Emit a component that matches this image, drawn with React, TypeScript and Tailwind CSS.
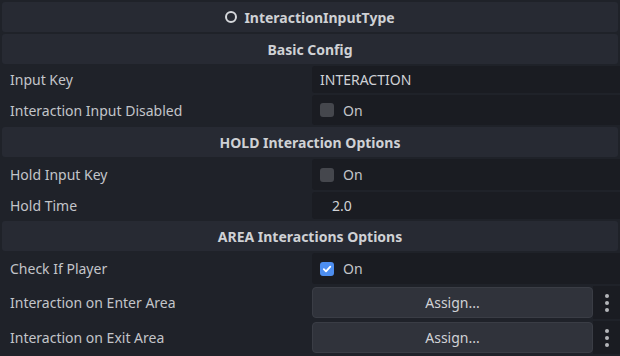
import React from "react";

function Header({ title, icon }: { title: string; icon?: boolean }) {
  return (
    <div className="mx-[2px] h-[30px] rounded-[3px] bg-[#272a33] flex items-center justify-center gap-[7px] text-[14px] font-bold text-[#cfd1d5]">
      {icon && (
        <span className="w-[12px] h-[12px] rounded-full border-2 border-[#d6d8dc]" />
      )}
      {title}
    </div>
  );
}

function Row({ label, children, h = "h-[28px]" }: { label: string; children: React.ReactNode; h?: string }) {
  return (
    <div className={`flex items-stretch ${h}`}>
      <div className="w-[312px] shrink-0 flex items-center pl-[10px] text-[#c3c5c9]">{label}</div>
      <div className="flex-1 flex">{children}</div>
    </div>
  );
}

function Field({ children, className = "" }: { children: React.ReactNode; className?: string }) {
  return (
    <div className={`flex-1 rounded-l-[3px] bg-[#1a1c22] flex items-center text-[#d0d2d6] ${className}`}>
      {children}
    </div>
  );
}

function Check({ checked }: { checked?: boolean }) {
  return (
    <Field className="pl-[8px] gap-[9px]">
      {checked ? (
        <span className="w-[14px] h-[14px] rounded-[3px] bg-[#4d8ef0] flex items-center justify-center">
          <svg width="10" height="10" viewBox="0 0 10 10">
            <path d="M1.8 5.2 L4 7.4 L8.3 2.6" fill="none" stroke="#fff" strokeWidth="1.8" strokeLinecap="round" strokeLinejoin="round" />
          </svg>
        </span>
      ) : (
        <span className="w-[14px] h-[14px] rounded-[3px] bg-[#45474d]" />
      )}
      <span className="text-[#c3c5c9]">On</span>
    </Field>
  );
}

function Assign() {
  return (
    <>
      <div className="w-[281px] my-[1px] rounded-[4px] bg-[#30333b] border border-[#3a3d45] flex items-center justify-center text-[#d0d2d6]">
        Assign...
      </div>
      <div className="flex-1 bg-[#1a1c22] flex flex-col items-center justify-center gap-[3px]">
        <span className="w-[4px] h-[4px] rounded-full bg-[#b4b6ba]" />
        <span className="w-[4px] h-[4px] rounded-full bg-[#b4b6ba]" />
        <span className="w-[4px] h-[4px] rounded-full bg-[#b4b6ba]" />
      </div>
    </>
  );
}

export default function App() {
  return (
    <div
      className="w-[620px] h-[356px] overflow-hidden bg-[#1f2229] pt-[2px] flex flex-col gap-[2px] text-[14px]"
      style={{ fontFamily: '"Noto Sans", sans-serif' }}
    >
      <Header title="InteractionInputType" icon />
      <Header title="Basic Config" />
      <Row label="Input Key" h="h-[27px]">
        <Field className="pl-[8px]">INTERACTION</Field>
      </Row>
      <Row label="Interaction Input Disabled" h="h-[30px]">
        <Check />
      </Row>
      <Header title="HOLD Interaction Options" />
      <Row label="Hold Input Key" h="h-[31px]">
        <Check />
      </Row>
      <Row label="Hold Time" h="h-[27px]">
        <Field className="pl-[20px]">2.0</Field>
      </Row>
      <Header title="AREA Interactions Options" />
      <Row label="Check If Player" h="h-[31px]">
        <Check checked />
      </Row>
      <Row label="Interaction on Enter Area" h="h-[33px]">
        <Assign />
      </Row>
      <Row label="Interaction on Exit Area" h="h-[33px]">
        <Assign />
      </Row>
    </div>
  );
}
